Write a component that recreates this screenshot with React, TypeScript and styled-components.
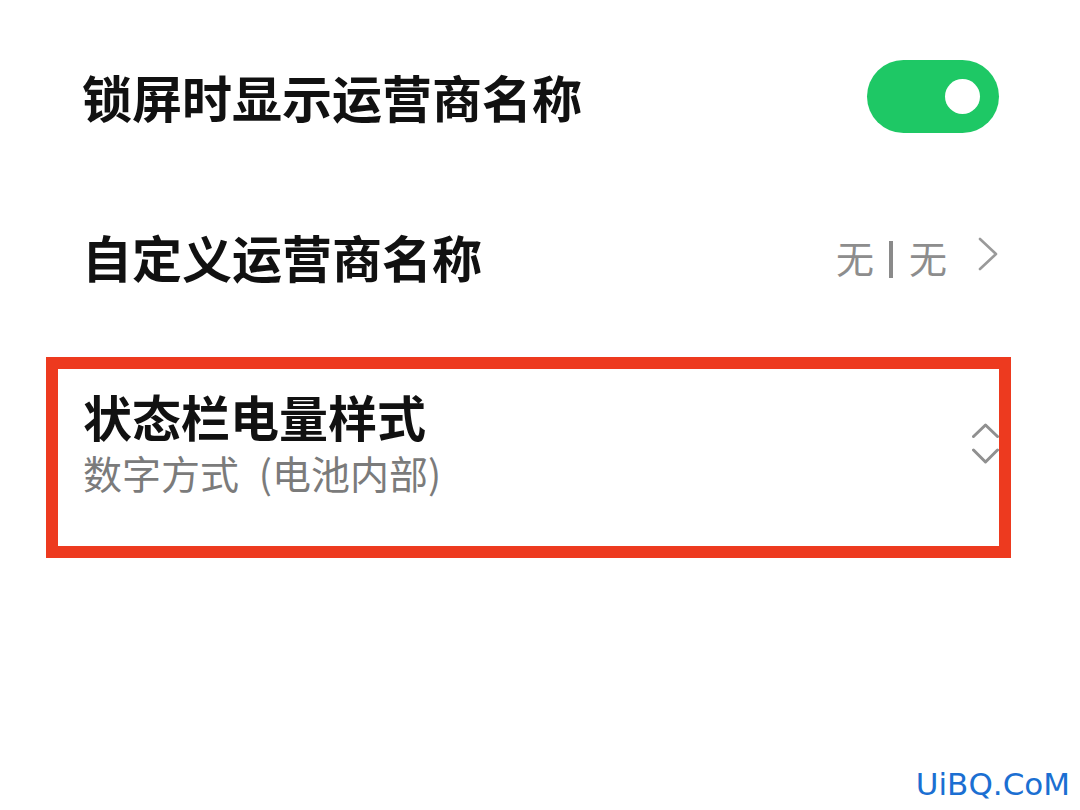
import React from "react";
import styled, { createGlobalStyle } from "styled-components";

const GlobalStyle = createGlobalStyle`
  html, body {
    margin: 0;
    padding: 0;
    background: #ffffff;
  }
  body {
    font-family: "Noto Sans CJK SC", "Noto Sans", sans-serif;
  }
`;

const Page = styled.div`
  position: relative;
  width: 1080px;
  height: 810px;
  box-sizing: border-box;
  padding: 20px 81px 0 82px;
  background: #fff;
  overflow: hidden;
`;

const Row = styled.div`
  display: flex;
  align-items: center;
  justify-content: space-between;
  height: 160px;
`;

const Title = styled.div<{ size?: number }>`
  font-size: ${p => p.size ?? 50}px;
  line-height: 56px;
  font-weight: 700;
  color: #111;
`;

const RowTitle = styled(Title)`
  margin-bottom: 8px;
`;

const Sub = styled.div`
  font-size: 39px;
  line-height: 44px;
  color: #7b7b7b;
  word-spacing: 11px;
`;

const Toggle = styled.div<{ on?: boolean }>`
  display: flex;
  align-items: center;
  justify-content: ${p => (p.on ? "flex-end" : "flex-start")};
  box-sizing: border-box;
  width: 132px;
  height: 73px;
  margin-bottom: 7px;
  padding: 0 19px;
  border-radius: 37px;
  background: ${p => (p.on ? "#1ec865" : "#d6d6d6")};
`;

const Knob = styled.span`
  width: 35px;
  height: 35px;
  border-radius: 50%;
  background: #fff;
`;

const Value = styled.div`
  display: flex;
  align-items: center;
  margin-bottom: 6px;
  font-size: 38px;
  line-height: 46px;
  color: #8d8d8d;
`;

const Divider = styled.span`
  width: 4px;
  height: 37px;
  margin: 4px 16px 0 15px;
  background: #8a8a8a;
`;

const Chevron = styled.svg`
  margin-left: 31px;
  margin-right: 1px;
  margin-bottom: 7px;
`;

const Highlight = styled.div`
  display: flex;
  align-items: center;
  justify-content: space-between;
  box-sizing: border-box;
  height: 201px;
  margin: 17px -12px 0 -36px;
  padding: 0 0 0 25px;
  border: 12px solid #ed3a1f;
`;

const TextBlock = styled.div`
  display: flex;
  flex-direction: column;
  gap: 6px;
  margin-bottom: 34px;
`;

const UpDown = styled.svg`
  margin-bottom: 28px;
`;

const Watermark = styled.div`
  position: absolute;
  right: 10px;
  bottom: 8px;
  font-family: "DejaVu Sans", sans-serif;
  font-size: 31px;
  color: #1b6fd2;
`;

export default function App() {
  return (
    <>
      <GlobalStyle />
      <Page>
        <Row>
          <RowTitle>锁屏时显示运营商名称</RowTitle>
          <Toggle on>
            <Knob />
          </Toggle>
        </Row>
        <Row>
          <RowTitle>自定义运营商名称</RowTitle>
          <Value>
            无<Divider />无
            <Chevron width="20" height="34" viewBox="0 0 20 34">
              <polyline points="2,2 18,17 2,32" fill="none" stroke="#9a9a9a" strokeWidth="2.6" strokeLinecap="round" strokeLinejoin="round" />
            </Chevron>
          </Value>
        </Row>
        <Highlight>
          <TextBlock>
            <Title size={49}>状态栏电量样式</Title>
            <Sub>数字方式 (电池内部)</Sub>
          </TextBlock>
          <UpDown width="27" height="42" viewBox="0 0 27 42">
            <polyline points="1.5,13.5 13.5,2 25.5,13.5" fill="none" stroke="#909090" strokeWidth="3" strokeLinecap="round" strokeLinejoin="round" />
            <polyline points="1.5,27 13.5,39 25.5,27" fill="none" stroke="#909090" strokeWidth="3" strokeLinecap="round" strokeLinejoin="round" />
          </UpDown>
        </Highlight>
        <Watermark>UiBQ.CoM</Watermark>
      </Page>
    </>
  );
}
